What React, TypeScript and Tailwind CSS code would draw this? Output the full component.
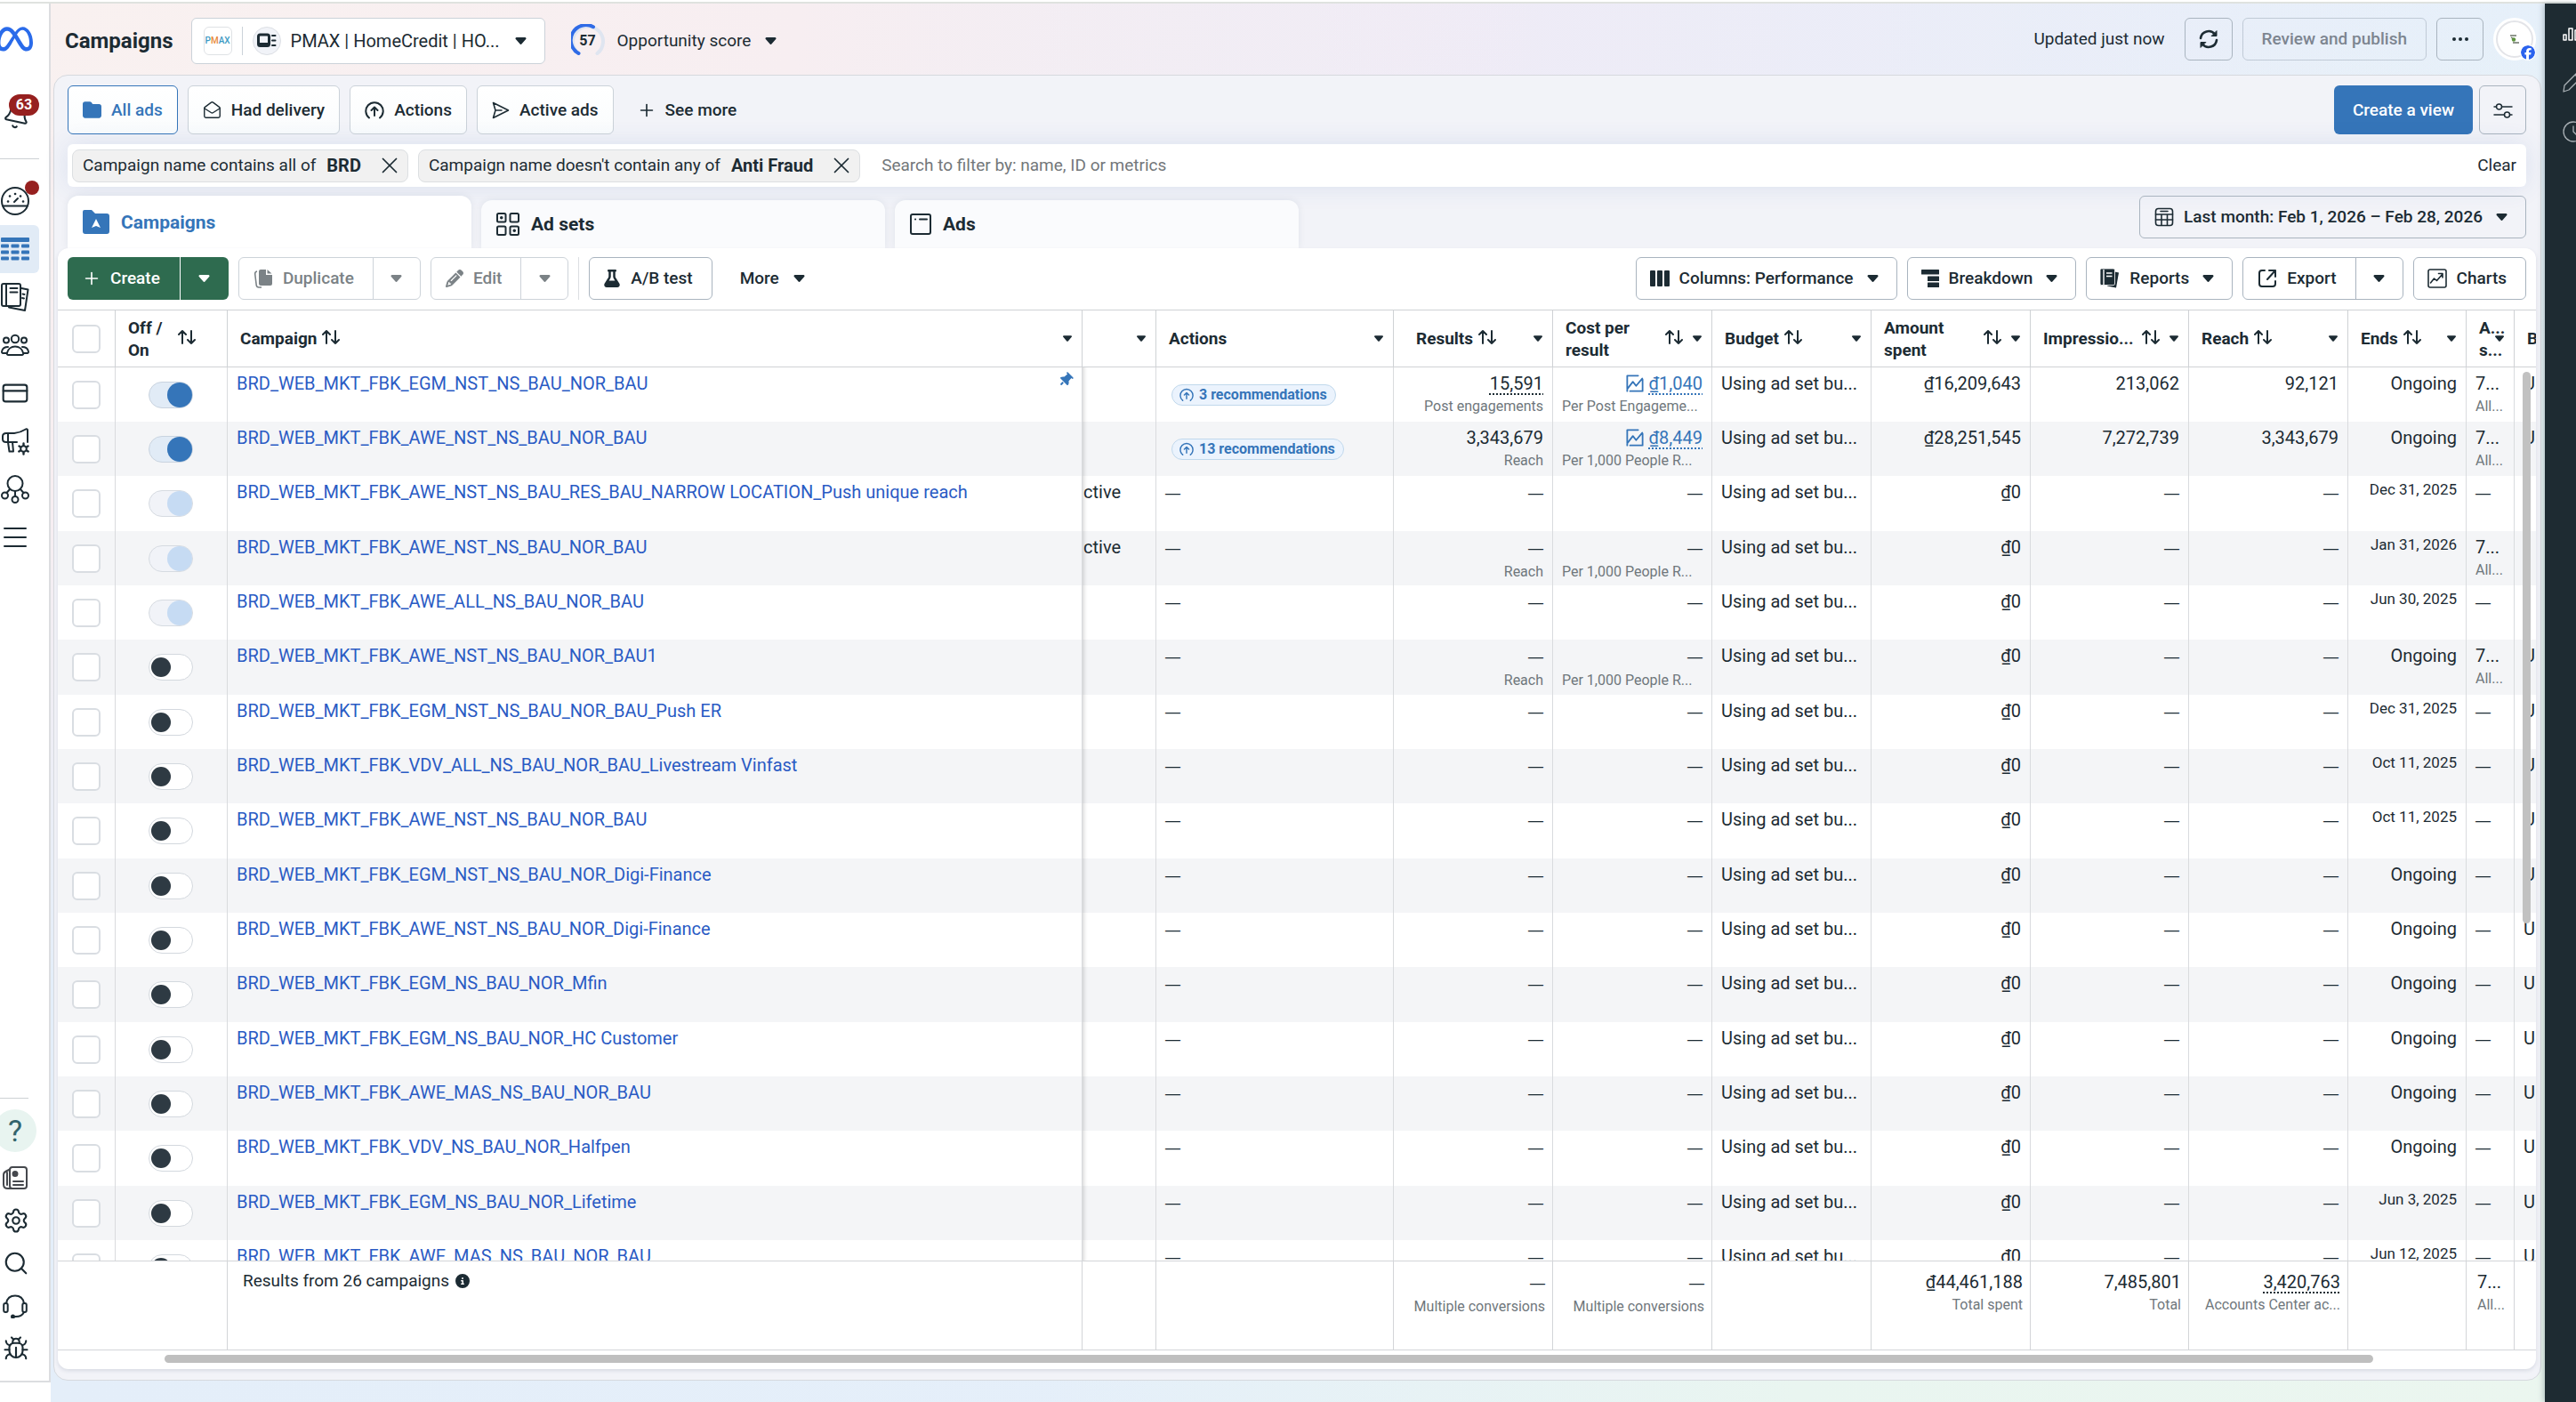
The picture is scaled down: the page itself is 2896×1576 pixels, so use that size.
import React, { ReactNode } from 'react';
import { Bell, MailOpen, Plus, X, CreditCard, Search, Bug, Settings } from 'lucide-react';
import { FaMeta, FaFacebook, FaFolder, FaThumbtack, FaPencil, FaFlask, FaCircleInfo } from 'react-icons/fa6';

type ToggleState = 'on' | 'locked' | 'off';

interface Campaign {
  name: string;
  toggle: ToggleState;
  pinned?: boolean;
  status?: string;
  recommendations?: string;
  results?: string;
  resultsNote?: string;
  cost?: string;
  costNote?: string;
  spent?: string;
  impressions?: string;
  reach?: string;
  ends: string;
  attribution?: boolean;
  bid?: string;
}

const REACH_COST = 'Per 1,000 People R...';

const campaigns: Campaign[] = [
  { name: 'BRD_WEB_MKT_FBK_EGM_NST_NS_BAU_NOR_BAU', toggle: 'on', pinned: true, recommendations: '3 recommendations', results: '15,591', resultsNote: 'Post engagements', cost: '₫1,040', costNote: 'Per Post Engageme...', spent: '₫16,209,643', impressions: '213,062', reach: '92,121', ends: 'Ongoing', attribution: true, bid: 'U' },
  { name: 'BRD_WEB_MKT_FBK_AWE_NST_NS_BAU_NOR_BAU', toggle: 'on', recommendations: '13 recommendations', results: '3,343,679', resultsNote: 'Reach', cost: '₫8,449', costNote: REACH_COST, spent: '₫28,251,545', impressions: '7,272,739', reach: '3,343,679', ends: 'Ongoing', attribution: true, bid: 'U' },
  { name: 'BRD_WEB_MKT_FBK_AWE_NST_NS_BAU_RES_BAU_NARROW LOCATION_Push unique reach', toggle: 'locked', status: 'ctive', ends: 'Dec 31, 2025' },
  { name: 'BRD_WEB_MKT_FBK_AWE_NST_NS_BAU_NOR_BAU', toggle: 'locked', status: 'ctive', resultsNote: 'Reach', costNote: REACH_COST, ends: 'Jan 31, 2026', attribution: true },
  { name: 'BRD_WEB_MKT_FBK_AWE_ALL_NS_BAU_NOR_BAU', toggle: 'locked', ends: 'Jun 30, 2025' },
  { name: 'BRD_WEB_MKT_FBK_AWE_NST_NS_BAU_NOR_BAU1', toggle: 'off', resultsNote: 'Reach', costNote: REACH_COST, ends: 'Ongoing', attribution: true, bid: 'U' },
  { name: 'BRD_WEB_MKT_FBK_EGM_NST_NS_BAU_NOR_BAU_Push ER', toggle: 'off', ends: 'Dec 31, 2025', bid: 'U' },
  { name: 'BRD_WEB_MKT_FBK_VDV_ALL_NS_BAU_NOR_BAU_Livestream Vinfast', toggle: 'off', ends: 'Oct 11, 2025', bid: 'U' },
  { name: 'BRD_WEB_MKT_FBK_AWE_NST_NS_BAU_NOR_BAU', toggle: 'off', ends: 'Oct 11, 2025', bid: 'U' },
  { name: 'BRD_WEB_MKT_FBK_EGM_NST_NS_BAU_NOR_Digi-Finance', toggle: 'off', ends: 'Ongoing', bid: 'U' },
  { name: 'BRD_WEB_MKT_FBK_AWE_NST_NS_BAU_NOR_Digi-Finance', toggle: 'off', ends: 'Ongoing', bid: 'U' },
  { name: 'BRD_WEB_MKT_FBK_EGM_NS_BAU_NOR_Mfin', toggle: 'off', ends: 'Ongoing', bid: 'U' },
  { name: 'BRD_WEB_MKT_FBK_EGM_NS_BAU_NOR_HC Customer', toggle: 'off', ends: 'Ongoing', bid: 'U' },
  { name: 'BRD_WEB_MKT_FBK_AWE_MAS_NS_BAU_NOR_BAU', toggle: 'off', ends: 'Ongoing', bid: 'U' },
  { name: 'BRD_WEB_MKT_FBK_VDV_NS_BAU_NOR_Halfpen', toggle: 'off', ends: 'Ongoing', bid: 'U' },
  { name: 'BRD_WEB_MKT_FBK_EGM_NS_BAU_NOR_Lifetime', toggle: 'off', ends: 'Jun 3, 2025', bid: 'U' },
  { name: 'BRD_WEB_MKT_FBK_AWE_MAS_NS_BAU_NOR_BAU', toggle: 'off', ends: 'Jun 12, 2025', bid: 'U' },
];

/* ---------- icons ---------- */

const Svg: React.FC<{ box?: string; className?: string; children: ReactNode }> = ({ box = '0 0 32 32', className = 'w-8 h-8', children }) => (
  <svg viewBox={box} className={`shrink-0 ${className}`} fill="none" stroke="currentColor" strokeWidth="2" strokeLinecap="round" strokeLinejoin="round" aria-hidden="true">
    {children}
  </svg>
);

const Caret: React.FC<{ small?: boolean }> = ({ small }) => (
  <svg viewBox="0 0 12 8" className={small ? 'w-[10px] h-[7px] shrink-0' : 'w-[13px] h-2 shrink-0'} fill="currentColor" aria-hidden="true">
    <path d="M1.2 0h9.6a1.2 1.2 0 0 1 .9 2L6.9 7.5a1.2 1.2 0 0 1-1.8 0L.3 2a1.2 1.2 0 0 1 .9-2z" />
  </svg>
);

const SortArrows = () => (
  <Svg box="0 0 20 18" className="w-5 h-[18px]">
    <path d="M5 16V2M1 6l4-4 4 4M15 2v14M11 12l4 4 4-4" />
  </Svg>
);

const GaugeIcon = () => (
  <Svg>
    <circle cx="16" cy="16" r="15" />
    <path d="M2.5 21.5h27M15 17l4-4" />
    <path d="M8 16.5h.1M10 10.5h.1M16 8h.1M22 10.5h.1M25 16.5h.1" strokeWidth="2.6" />
  </Svg>
);

const GridIcon = () => (
  <svg viewBox="0 0 32 26" className="w-8 h-[26px] shrink-0" fill="currentColor" aria-hidden="true">
    <rect x="0" y="0" width="32" height="5" rx="1" />
    {[7.5, 14.5, 21.5].map((y) =>
      [0, 11.5, 23].map((x) => <rect key={`${x}-${y}`} x={x} y={y} width="9" height="4" rx="1" />)
    )}
  </svg>
);

const PagesIcon = () => (
  <Svg>
    <rect x="1" y="1" width="21" height="25" rx="2" />
    <path d="M6 1v25M10.5 6h8M10.5 10.5h8M23 6l7.5 1.5-3.5 23.5-18-3.5M24.5 12.5l2 .4M24 17l2 .4" />
  </Svg>
);

const PeopleIcon = () => (
  <Svg box="0 0 32 26" className="w-8 h-[26px]">
    <circle cx="16" cy="6" r="4.2" />
    <circle cx="6" cy="7.500" r="3" />
    <circle cx="26" cy="7.500" r="3" />
    <path d="M8.5 24c-1.500 0-2-1-1.500-2.500C8 17.500 11.500 14.500 16 14.500s8 3 9 7c.5 1.500 0 2.500-1.500 2.500zM7 22H2.500C1 22 .8 20.500 1.200 19.500 2 16.500 4.500 15 8 15M25 22h4.500c1.500 0 1.700-1.500 1.300-2.500-.8-3-3.300-4.500-6.800-4.500" />
  </Svg>
);

const MegaphoneIcon = () => (
  <Svg>
    <path d="M30 17V3.500c0-1-1-1.500-2-1-4 2.500-8 4-13 4.500H6C3.500 7 2 8.500 2 10.500v3C2 16 3.500 17 6 17h12M8 7v10l1.500 10.500h4.500L13 17" />
    <circle cx="25.5" cy="24.5" r="3.300" />
    <path d="M25.5 18.500v2M25.500 28.500v2M20.500 21.500l1.700 1M29 26.500l1.700 1M30.500 21.500l-1.700 1M22 26.500l-1.700 1" strokeWidth="2.400" />
  </Svg>
);

const NodesIcon = () => (
  <Svg>
    <circle cx="16" cy="9.5" r="8.5" />
    <circle cx="4.5" cy="23" r="3.5" />
    <circle cx="16" cy="27.5" r="3.5" />
    <circle cx="27.5" cy="23" r="3.5" />
    <path d="M10 16l-3.500 4M16 18v6M22 16l3.500 4" />
  </Svg>
);

const MenuIcon = () => (
  <Svg>
    <path d="M4 6h24M4 16h24M4 26h24" />
  </Svg>
);

const NewsIcon = () => (
  <Svg box="0 0 28 28" className="w-7 h-7 text-[#45484d]">
    <rect x="8" y="2" width="19" height="24" rx="3" />
    <path d="M8 4.500 4 6.500c-2 1-3 2-3 4v11C1 24.500 3 26 6 26h5M5 8v14M12 18h11M12 22h11" />
    <circle cx="14" cy="9.5" r="2.5" fill="currentColor" />
  </Svg>
);

const HeadsetIcon = () => (
  <Svg box="0 0 28 28" className="w-7 h-7">
    <rect x="1.2" y="11" width="4.5" height="10" rx="2" />
    <rect x="22.3" y="11" width="4.5" height="10" rx="2" />
    <path d="M4 11C5 5.500 9 2.500 14 2.500s9 3 10 8.500M24 21c-2 4-6 5.500-11 5" />
    <circle cx="11.5" cy="26" r="1.5" fill="currentColor" />
  </Svg>
);

const ArrowCircleIcon: React.FC<{ className?: string }> = ({ className = 'w-[22px] h-[22px]' }) => (
  <Svg box="0 0 22 22" className={className}>
    <path d="M5 19.500a9.700 9.700 0 1 1 12 0M11 17V8M7.500 11 11 7.500l3.500 3.500" />
  </Svg>
);

const SendIcon = () => (
  <Svg box="0 0 20 20" className="w-5 h-5">
    <path d="M1.500 1.500 18.500 10 1.500 18.500 4 10zM4 10h7" strokeWidth="1.6" />
  </Svg>
);

const TrendIcon: React.FC<{ className?: string }> = ({ className = 'w-[22px] h-[22px]' }) => (
  <Svg box="0 0 22 22" className={className}>
    <path d="M15 1.500H1.500V20.500M5 20.500H20.500V6M1.500 18l7-9 4 5 7.500-9" />
  </Svg>
);

const PersonCardIcon = () => (
  <Svg box="0 0 22 18" className="w-[22px] h-[18px]">
    <rect x="1.5" y="2" width="12" height="12.5" rx="2" strokeWidth="3" />
    <path d="M3 12h9M17 3h3.500M17 8.500h3.500M17 14h3.500" />
  </Svg>
);

/* ---------- shared controls ---------- */

const CheckBox: React.FC<{ label: string }> = ({ label }) => (
  <input type="checkbox" aria-label={label} className="block appearance-none w-8 h-8 bg-white border-2 border-[#d9dde2] rounded-md" />
);

const toggleTrack: Record<ToggleState, string> = {
  on: 'bg-[#e1ebf6] border-[#c9d3df] justify-end',
  locked: 'bg-[#f1f3f8] border-[#d6dbe1] justify-end',
  off: 'bg-white border-[#d3d8de] justify-start pl-[2px]',
};
const toggleKnob: Record<ToggleState, string> = {
  on: 'w-7 h-7 bg-[#3575b9]',
  locked: 'w-7 h-7 bg-[#c6dbf3]',
  off: 'w-[22px] h-[22px] bg-[#2e3a43]',
};

const Toggle: React.FC<{ state: ToggleState; label: string }> = ({ state, label }) => (
  <button role="switch" aria-checked={state !== 'off'} aria-label={label} className={`flex items-center w-[50px] h-[30px] rounded-full border ${toggleTrack[state]}`}>
    <span className={`rounded-full ${toggleKnob[state]}`} />
  </button>
);

const ToolButton: React.FC<{ icon: ReactNode; children: ReactNode; caret?: boolean }> = ({ icon, children, caret }) => (
  <button className={`flex items-center gap-[11px] h-12 pl-[15px] rounded-md border border-[#a9b4bf] bg-white font-medium ${caret ? 'pr-5' : 'pr-[21px]'}`}>
    {icon}
    <span>{children}</span>
    {caret && <span className="pl-1"><Caret /></span>}
  </button>
);

const SplitButton: React.FC<{ icon: ReactNode; children: ReactNode; disabled?: boolean }> = ({ icon, children, disabled }) => (
  <div className={`flex h-12 rounded-md border bg-white font-medium ${disabled ? 'border-[#cdd3d9] text-[#7b8286]' : 'border-[#a9b4bf]'}`}>
    <button disabled={disabled} className="flex items-center gap-[11px] pl-4 pr-[21px]">
      {icon}
      <span>{children}</span>
    </button>
    <button disabled={disabled} aria-label="More options" className={`flex items-center justify-center w-[53px] border-l ${disabled ? 'border-[#cdd3d9]' : 'border-[#a9b4bf]'}`}>
      <Caret />
    </button>
  </div>
);

const ViewTab: React.FC<{ icon: ReactNode; active?: boolean; children: ReactNode }> = ({ icon, active, children }) => (
  <button className={`flex items-center gap-[11px] h-[55px] px-4 rounded-md border bg-linear-to-b from-white to-[#fafcfd] font-medium ${active ? 'border-[#3575b9] text-[#3575b9]' : 'border-[#cbd2d9]'}`}>
    {icon}
    {children}
  </button>
);

const Chip: React.FC<{ text: string; value: string }> = ({ text, value }) => (
  <div className="flex items-center h-[37px] pl-[11px] pr-[5px] rounded-lg border border-[#dcdfe2] bg-[#f1f1f1]">
    <span>{text}</span>
    <b className="ml-3 text-xl">{value}</b>
    <button aria-label={`Remove filter ${value}`} className="ml-[17px]"><X size={30} strokeWidth={1.4} /></button>
  </div>
);

/* ---------- sidebar ---------- */

const NavItem: React.FC<{ label: string; active?: boolean; children: ReactNode }> = ({ label, active, children }) => (
  <a href="#" aria-label={label} className={`relative flex items-center w-11 h-[54px] pl-px rounded-r-md ${active ? 'bg-[#e1ebf6] text-[#3575b9]' : ''}`}>
    {children}
  </a>
);

const UtilItem: React.FC<{ label: string; children: ReactNode }> = ({ label, children }) => (
  <a href="#" aria-label={label} className="flex items-center w-11 h-12 pl-[3px]">{children}</a>
);

const Sidebar = () => (
  <nav className="flex flex-col w-[57px] shrink-0 bg-white border-r-2 border-b-2 border-[#dcdde0] mb-[22px] overflow-hidden">
    <a href="#" aria-label="Meta" className="flex mt-5 -ml-1 text-[#2a6bea]"><FaMeta className="w-[41px] h-10" /></a>
    <a href="#" aria-label="Notifications" className="relative flex mt-[50px] ml-[3px] h-[34px] w-11">
      <Bell className="w-8 h-8 rotate-12" strokeWidth={1.6} />
      <span className="absolute -top-2 left-[7px] w-[34px] h-6 rounded-full bg-[#96201f] text-white text-base leading-6 font-bold text-center">63</span>
    </a>
    <hr className="mt-[30px] w-11 border-[#cdd1d4]" />
    <div className="mt-5">
      <NavItem label="Account overview">
        <GaugeIcon />
        <span className="absolute top-1 right-0 w-4 h-4 rounded-full bg-[#96201f]" />
      </NavItem>
      <NavItem label="Campaigns" active><GridIcon /></NavItem>
      <NavItem label="Ads reporting"><PagesIcon /></NavItem>
      <NavItem label="Audiences"><PeopleIcon /></NavItem>
      <NavItem label="Billing"><CreditCard className="w-8 h-8" strokeWidth={1.6} /></NavItem>
      <NavItem label="Advertising settings"><MegaphoneIcon /></NavItem>
      <NavItem label="Events manager"><NodesIcon /></NavItem>
      <NavItem label="All tools"><MenuIcon /></NavItem>
    </div>
    <hr className="mt-auto w-8 border-[#cdd1d4]" />
    <a href="#" aria-label="Help" className="flex items-center justify-center mt-3 -ml-[7px] w-12 h-12 rounded-full bg-[#e8f4f0] text-[#33646c] text-[34px] leading-none">?</a>
    <div className="mt-[5px] mb-3">
      <UtilItem label="News"><NewsIcon /></UtilItem>
      <UtilItem label="Settings"><Settings size={30} strokeWidth={1.7} /></UtilItem>
      <UtilItem label="Search"><Search size={30} strokeWidth={1.7} /></UtilItem>
      <UtilItem label="Support"><HeadsetIcon /></UtilItem>
      <UtilItem label="Report a bug"><Bug size={30} strokeWidth={1.7} /></UtilItem>
    </div>
  </nav>
);

const Rail = () => (
  <aside className="w-[35px] shrink-0 overflow-hidden bg-[#1e2b32] text-[#aab1b6] shadow-[-2px_0_6px_rgba(30,60,70,0.25)] z-10">
    <div className="flex flex-col items-start gap-8 pt-5 pl-5">
      <Svg box="0 0 24 24" className="w-6 h-6 text-white">
        <path d="M1 15h3v6H1zM7 8h4v13H7zM14 10h4v11h-4z" strokeWidth="1.5" />
      </Svg>
      <Svg box="0 0 24 24" className="w-6 h-6">
        <path d="M1 23l1-7L17 1l5 5L7 21zM14 4l5 5" strokeWidth="1.3" />
      </Svg>
      <Svg box="0 0 24 24" className="w-6 h-6">
        <circle cx="12" cy="12" r="11" strokeWidth="1.3" />
        <path d="M12 6v6l3 3" strokeWidth="1.3" />
      </Svg>
    </div>
  </aside>
);

/* ---------- header ---------- */

const Header = () => (
  <header className="flex items-center h-20 pl-[13px] pr-[6px] pt-1">
    <h1 className="text-2xl font-bold">Campaigns</h1>
    <button className="flex items-center h-[52px] w-[398px] ml-5 pl-[13px] pr-5 rounded-md border border-[#cbd2d9] bg-white">
      <span className="flex items-center justify-center w-8 h-8 rounded-md border border-[#dfe2e5] text-[10px] font-medium text-[#3c9ac4]">
        P<span className="text-[#e98a3c]">M</span>AX
      </span>
      <span className="w-px h-8 mx-[11px] bg-[#cbd2d9]" />
      <span className="flex items-center justify-center w-8 h-8 rounded-full border border-[#dcdfe4] bg-[#f1f3f8]"><PersonCardIcon /></span>
      <span className="ml-[11px] text-xl">PMAX | HomeCredit | HO...</span>
      <span className="ml-auto"><Caret /></span>
    </button>
    <div className="relative ml-[29px] w-[38px] h-[38px] flex items-center justify-center">
      <svg viewBox="0 0 38 38" className="absolute inset-0" fill="none" strokeWidth="4" strokeLinecap="round" aria-hidden="true">
        <path d="M8.5 33A17 17 0 1 1 29.500 33" stroke="#dfe5f0" />
        <path d="M8.5 33A17 17 0 0 1 25 3.200" stroke="#2f6be6" />
      </svg>
      <b className="text-base">57</b>
    </div>
    <button className="flex items-center gap-4 ml-[14px]">
      Opportunity score <Caret />
    </button>
    <div className="flex items-center ml-auto pb-1">
      <span>Updated just now</span>
      <button aria-label="Refresh" className="flex items-center justify-center w-[54px] h-12 ml-[22px] rounded-md border border-[#a9b4bf]">
        <Svg box="0 0 22 22" className="w-[22px] h-[22px]">
          <path d="M2 10a9 9 0 0 1 16-4.500M20 12a9 9 0 0 1-16 4.500" strokeWidth="2.6" />
          <path d="M20 2v5.500h-5.500zM2 20v-5.500h5.500z" fill="currentColor" strokeWidth="1" />
        </Svg>
      </button>
      <button disabled className="h-12 px-[21px] ml-[11px] rounded-md border border-[#c0cad6] text-[#7d8590] font-medium">Review and publish</button>
      <button aria-label="More" className="flex items-center justify-center gap-[3px] w-[53px] h-12 ml-[11px] rounded-md border border-[#a9b4bf]">
        <i className="w-1 h-1 rounded-full bg-[#1c2b33]" />
        <i className="w-1 h-1 rounded-full bg-[#1c2b33]" />
        <i className="w-1 h-1 rounded-full bg-[#1c2b33]" />
      </button>
      <div className="relative ml-[11px] w-12 h-12 rounded-full bg-white p-[3px]">
        <div className="flex items-center justify-center w-[42px] h-[42px] rounded-full border-2 border-[#e3e4e8]">
          <svg viewBox="0 0 12 10" className="w-3 h-[10px]" aria-hidden="true">
            <path d="M1 1h7M2 3l3 2M4 9h7" stroke="#6c7468" strokeWidth="1.5" />
            <circle cx="5" cy="5.5" r="2.2" fill="#5d9440" />
          </svg>
        </div>
        <FaFacebook className="absolute right-0 bottom-0 w-[18px] h-[18px] rounded-full bg-white text-[#2b63ee] border border-white" />
      </div>
    </div>
  </header>
);

/* ---------- table ---------- */

interface HeadProps {
  label: ReactNode;
  sort?: boolean;
  sortEnd?: boolean;
  caret?: boolean;
  pad?: string;
}

const Head: React.FC<HeadProps> = ({ label, sort, sortEnd, caret = true, pad = 'pl-[14px]' }) => (
  <th scope="col" className="sticky top-0 z-10 h-[65px] p-0 bg-white border-y border-r border-[#cfd2d5] text-left font-bold">
    <div className={`flex items-center pr-[11px] leading-[25px] ${pad}`}>
      <span>{label}</span>
      {sort && <span className={`pb-1 ${sortEnd ? 'ml-auto' : 'ml-[6px]'}`}><SortArrows /></span>}
      {caret && <span className={sortEnd ? 'ml-[11px]' : 'ml-auto'}><Caret small /></span>}
    </div>
  </th>
);

const Dash = () => <span className="font-['Liberation_Sans',sans-serif] text-[17px]">—</span>;

const Cell: React.FC<{ align?: 'left' | 'right'; className?: string; children?: ReactNode }> = ({ align = 'right', className = '', children }) => (
  <td className={`p-0 px-[10px] pt-[6px] align-top border-r border-[#d9dbde] overflow-hidden whitespace-nowrap ${align === 'left' ? 'text-left' : 'text-right'} ${className}`}>
    {children}
  </td>
);

const Note: React.FC<{ left?: boolean; children: ReactNode }> = ({ left, children }) => (
  <div className={`mt-1 text-base leading-5 text-[#6f777c] ${left ? 'text-left' : ''}`}>{children}</div>
);

const Row: React.FC<{ c: Campaign }> = ({ c }) => (
  <tr className="h-[61px] nth-[3n]:h-[62px] even:bg-[#f4f5f7]">
    <td className="p-0 pl-4 border-r border-[#d9dbde]"><CheckBox label={`Select ${c.name}`} /></td>
    <td className="p-0 pl-[37px] border-r border-[#d9dbde]"><Toggle state={c.toggle} label={`Turn ${c.name} on or off`} /></td>
    <Cell align="left">
      <div className="flex justify-between">
        <a href="#" className="text-[#2a5bc4]">{c.name}</a>
        {c.pinned && <FaThumbtack className="w-4 h-4 rotate-45 text-[#3575b9]" />}
      </div>
    </Cell>
    <td className="p-0 pl-px pt-[6px] align-top border-r border-[#d9dbde] shadow-[inset_6px_0_5px_-5px_rgba(0,0,0,0.2)]">{c.status}</td>
    {c.recommendations ? (
      <td className="p-0 pl-[17px] border-r border-[#d9dbde]">
        <button className="flex items-center gap-[6px] h-6 pl-2 pr-[9px] rounded-full border border-[#c0d8ec] bg-[#ebf3fd] text-[#3575b9] text-base font-bold whitespace-nowrap">
          <ArrowCircleIcon className="w-4 h-4" />
          {c.recommendations}
        </button>
      </td>
    ) : (
      <Cell align="left"><Dash /></Cell>
    )}
    <Cell>
      {c.pinned ? <span className="underline decoration-dotted decoration-2 underline-offset-4">{c.results}</span> : c.results ?? <Dash />}
      {c.resultsNote && <Note>{c.resultsNote}</Note>}
    </Cell>
    <Cell>
      {c.cost ? (
        <span className="flex items-center justify-end gap-[6px] text-[#3575b9]">
          <TrendIcon className="w-5 h-5" />
          <a href="#" className="underline decoration-dotted decoration-2 underline-offset-4">{c.cost}</a>
        </span>
      ) : <Dash />}
      {c.costNote && <Note left>{c.costNote}</Note>}
    </Cell>
    <Cell align="left">Using ad set bu...</Cell>
    <Cell>{c.spent ?? '₫0'}</Cell>
    <Cell>{c.impressions ?? <Dash />}</Cell>
    <Cell>{c.reach ?? <Dash />}</Cell>
    <Cell>{c.ends === 'Ongoing' ? c.ends : <div className="text-[17px] leading-[18px]">{c.ends}</div>}</Cell>
    <Cell align="left">
      {c.attribution ? '7...' : <Dash />}
      {c.attribution && <Note>All...</Note>}
    </Cell>
    <Cell align="left" className="border-r-0">{c.bid}</Cell>
  </tr>
);

const Total: React.FC<{ value?: ReactNode; note?: string; left?: boolean }> = ({ value, note, left }) => (
  <td className={`sticky bottom-0 z-10 h-[101px] p-0 pt-[11px] px-2 align-top bg-white border-y border-r border-[#d3d5d8] whitespace-nowrap overflow-hidden ${left ? 'pl-3 text-left' : 'text-right'}`}>
    {value}
    {note && <div className="mt-1 text-base leading-5 text-[#6f777c]">{note}</div>}
  </td>
);

const CampaignTable = () => (
  <div className="relative flex-1 min-h-0 overflow-hidden">
    <table className="w-full table-fixed border-separate border-spacing-0 text-xl leading-6">
      <colgroup>
        <col className="w-[65px]" />
        <col className="w-[126px]" />
        <col />
        <col className="w-[83px]" />
        <col className="w-[267px]" />
        <col className="w-[179px]" />
        <col className="w-[179px]" />
        <col className="w-[179px]" />
        <col className="w-[179px]" />
        <col className="w-[178px]" />
        <col className="w-[179px]" />
        <col className="w-[133px]" />
        <col className="w-[54px]" />
        <col className="w-[24px]" />
      </colgroup>
      <thead className="text-[19px]">
        <tr>
          <th className="sticky top-0 z-10 p-0 pl-4 bg-white border-y border-r border-[#cfd2d5]"><CheckBox label="Select all campaigns" /></th>
          <Head label={<>Off /<br />On</>} sort caret={false} pad="pl-[14px] gap-3" />
          <Head label="Campaign" sort />
          <Head label="" />
          <Head label="Actions" />
          <Head label="Results" sort pad="pl-[25px]" />
          <Head label={<>Cost per<br />result</>} sort sortEnd />
          <Head label="Budget" sort />
          <Head label={<>Amount<br />spent</>} sort sortEnd />
          <Head label="Impressio..." sort sortEnd />
          <Head label="Reach" sort />
          <Head label="Ends" sort />
          <th scope="col" className="sticky top-0 z-10 p-0 pl-[14px] bg-white border-y border-r border-[#cfd2d5] text-left leading-[25px]">
            A...<br />s...
            <span className="absolute right-[11px] top-7"><Caret small /></span>
          </th>
          <th scope="col" className="sticky top-0 z-10 p-0 pl-[14px] bg-white border-y border-[#cfd2d5] text-left overflow-hidden">B</th>
        </tr>
      </thead>
      <tbody>
        {campaigns.map((c, i) => <Row key={i} c={c} />)}
      </tbody>
      <tfoot>
        <tr>
          <td colSpan={2} className="sticky bottom-0 z-10 bg-white border-y border-r border-[#d3d5d8]" />
          <td className="sticky bottom-0 z-10 h-[101px] p-0 pt-[10px] pl-[17px] align-top bg-white border-y border-r border-[#d3d5d8] text-[19px]">
            <div className="flex items-center gap-[7px]">Results from 26 campaigns <FaCircleInfo className="w-4 h-4" /></div>
          </td>
          <Total />
          <Total />
          <Total value={<Dash />} note="Multiple conversions" />
          <Total value={<Dash />} note="Multiple conversions" />
          <Total />
          <Total value="₫44,461,188" note="Total spent" />
          <Total value="7,485,801" note="Total" />
          <Total value={<span className="underline decoration-dotted decoration-2 underline-offset-4">3,420,763</span>} note="Accounts Center ac..." />
          <Total />
          <Total left value="7..." note="All..." />
          <td className="sticky bottom-0 z-10 bg-white border-y border-[#d3d5d8]" />
        </tr>
      </tfoot>
    </table>
    <span className="absolute z-20 right-[6px] top-[70px] w-[9px] h-[620px] rounded-full bg-[#c1c1c1]" />
  </div>
);

/* ---------- page ---------- */

const LevelTab: React.FC<{ icon: ReactNode; active?: boolean; children: ReactNode }> = ({ icon, active, children }) => (
  <button
    role="tab"
    aria-selected={!!active}
    className={`flex items-center gap-[13px] w-[454px] pl-[17px] rounded-t-xl text-[21px] font-bold shadow-[0_0_8px_rgba(30,50,80,0.08)] ${active ? 'h-[59px] bg-white text-[#3575b9]' : 'h-[54px] bg-[#fafbfd]'}`}
  >
    {icon}
    {children}
  </button>
);

export default function App() {
  return (
    <div className="flex flex-col h-screen overflow-hidden bg-white font-[Roboto,sans-serif] text-[19px] leading-6 text-[#1c2b33]">
      <div className="h-1 shrink-0 border-b-2 border-[#dfe2df]" />
      <div className="flex flex-1 min-h-0">
        <Sidebar />
        <div className="flex flex-col flex-1 min-w-0 pl-[3px] pr-1 bg-[radial-gradient(ellipse_60%_70%_at_0%_0%,#f9f1f0_0%,#f7eef1_50%,transparent_100%),radial-gradient(ellipse_60%_100%_at_100%_100%,#ebf6ef_0%,#e9f5f0_50%,transparent_100%),radial-gradient(ellipse_45%_80%_at_55%_0%,#efebf6_0%,transparent_100%),linear-gradient(90deg,#e4eef9_0%,#e6f0fa_100%)]">
          <Header />
          <main className="flex flex-col flex-1 min-h-0 mb-6 rounded-2xl border border-[#d6d9de] bg-[#f2f3f8]">
            <div className="flex gap-[11px] pt-[11px] pl-[15px] pr-4">
              <ViewTab active icon={<FaFolder className="w-[21px] h-[21px]" />}>All ads</ViewTab>
              <ViewTab icon={<MailOpen size={21} strokeWidth={1.6} />}>Had delivery</ViewTab>
              <ViewTab icon={<ArrowCircleIcon />}>Actions</ViewTab>
              <ViewTab icon={<SendIcon />}>Active ads</ViewTab>
              <button className="flex items-center gap-[10px] ml-[15px] font-medium"><Plus size={22} strokeWidth={1.8} />See more</button>
              <button className="ml-auto px-[21px] rounded-md bg-[#3575b9] text-white font-medium">Create a view</button>
              <button aria-label="View settings" className="flex items-center justify-center w-[53px] -ml-1 rounded-md border border-[#a9b4bf]">
                <Svg box="0 0 22 18" className="w-[22px] h-[18px]">
                  <path d="M1 5h2M10 5h11M1 14h11M19 14h2" strokeWidth="1.5" />
                  <circle cx="6.5" cy="5" r="3" strokeWidth="1.5" />
                  <circle cx="15.5" cy="14" r="3" strokeWidth="1.5" />
                </Svg>
              </button>
            </div>

            <div className="flex items-center gap-[11px] h-12 mt-[11px] ml-[15px] mr-4 pl-[5px] pr-[11px] rounded-md bg-white shadow-[0_0_28px_rgba(50,90,170,0.12)]">
              <Chip text="Campaign name contains all of" value="BRD" />
              <Chip text="Campaign name doesn't contain any of" value="Anti Fraud" />
              <input aria-label="Search and filter" placeholder="Search to filter by: name, ID or metrics" className="flex-1 ml-[13px] outline-none placeholder:text-[#73777a]" />
              <button>Clear</button>
            </div>

            <div className="flex items-end gap-[11px] mt-[10px] pl-[15px] pr-4" role="tablist">
              <LevelTab active icon={
                <svg viewBox="0 0 30 27" className="w-[30px] h-[27px]" aria-hidden="true">
                  <path d="M2 0h8l4 4h13a3 3 0 0 1 3 3v17a3 3 0 0 1-3 3H3a3 3 0 0 1-3-3V2a2 2 0 0 1 2-2z" fill="#3575b9" />
                  <path d="M15 10l5 10-5-2-5 2z" fill="#fff" />
                </svg>
              }>Campaigns</LevelTab>
              <LevelTab icon={
                <Svg box="0 0 26 26" className="w-[26px] h-[26px]">
                  <rect x="1" y="1" width="9.5" height="9.5" rx="1.5" />
                  <rect x="15.5" y="1" width="9.5" height="9.5" rx="1.5" />
                  <rect x="1" y="15.5" width="9.5" height="9.5" rx="1.5" />
                  <rect x="15.5" y="15.5" width="9.5" height="9.5" rx="1.5" />
                  <path d="M5.7 5.700h.1M20.200 20.200h.1" strokeWidth="3.5" />
                </Svg>
              }>Ad sets</LevelTab>
              <LevelTab icon={
                <Svg box="0 0 24 24" className="w-6 h-6">
                  <rect x="1" y="1" width="22" height="22" rx="2" />
                  <path d="M6 6.500h.1M11 6.500h8" />
                </Svg>
              }>Ads</LevelTab>
              <button className="flex items-center gap-[11px] h-12 ml-auto mb-[11px] pl-4 pr-5 rounded-md border border-[#a9b4bf] font-medium">
                <Svg box="0 0 22 22" className="w-[22px] h-[22px]">
                  <rect x="1.5" y="1.5" width="19" height="19" rx="3" strokeWidth="1.6" />
                  <path d="M7 4.500h8M1.500 8h19M1.500 14h19M8 8v12M14.500 8v12" strokeWidth="1.6" />
                </Svg>
                <span>Last month: Feb 1, 2026 – Feb 28, 2026</span>
                <span className="pl-1"><Caret /></span>
              </button>
            </div>

            <section className="flex flex-col flex-1 min-h-0 ml-1 mr-[5px] mb-3 rounded-xl bg-white shadow-[0_2px_4px_rgba(30,50,80,0.12)] overflow-hidden">
              <div className="flex items-center gap-[11px] h-[69px] px-[11px] pb-px">
                <div className="flex gap-px h-12 rounded-md overflow-hidden text-white font-medium">
                  <button className="flex items-center gap-[10px] pl-4 pr-[22px] bg-[#2e6b4f]"><Plus size={22} strokeWidth={1.8} />Create</button>
                  <button aria-label="Create options" className="flex items-center justify-center w-[54px] bg-[#2e6b4f]"><Caret /></button>
                </div>
                <SplitButton disabled icon={
                  <svg viewBox="0 0 22 22" className="w-[22px] h-[22px]" fill="currentColor" aria-hidden="true">
                    <path d="M8 1h6v6h7v10a2 2 0 0 1-2 2H8a2 2 0 0 1-2-2V3a2 2 0 0 1 2-2zM15.500 1l5 4.500h-5z" />
                    <path d="M4 3c-2 .5-2.500 1.500-2.300 3l1.500 12.500C3.500 20.500 4.500 21 6 21h3" fill="none" stroke="currentColor" strokeWidth="1.6" />
                  </svg>
                }>Duplicate</SplitButton>
                <SplitButton disabled icon={<FaPencil className="w-5 h-5" />}>Edit</SplitButton>
                <span className="w-px h-12 bg-[#dcdfe2]" />
                <ToolButton icon={<FaFlask className="w-5 h-5" />}>A/B test</ToolButton>
                <button className="flex items-center gap-4 ml-5 font-medium">More <Caret /></button>

                <div className="flex gap-[11px] ml-auto">
                  <ToolButton caret icon={
                    <svg viewBox="0 0 22 18" className="w-[22px] h-[18px]" fill="currentColor" aria-hidden="true">
                      <rect width="6" height="18" rx="1" /><rect x="8" width="6" height="18" rx="1" /><rect x="16" width="6" height="18" rx="1" />
                    </svg>
                  }>Columns: Performance</ToolButton>
                  <ToolButton caret icon={
                    <svg viewBox="0 0 20 20" className="w-5 h-5" fill="currentColor" aria-hidden="true">
                      <rect width="20" height="5.5" rx=".5" /><rect x="7" y="7.500" width="13" height="5.5" rx=".5" /><rect x="7" y="14.500" width="13" height="5.5" rx=".5" />
                    </svg>
                  }>Breakdown</ToolButton>
                  <ToolButton caret icon={
                    <svg viewBox="0 0 22 22" className="w-[22px] h-[22px]" aria-hidden="true">
                      <path d="M16.500 3.500 21 4.500l-3 17-10-2" fill="#1c2b33" />
                      <rect width="16.5" height="18.5" rx="1.5" fill="#1c2b33" stroke="#fff" strokeWidth=".8" />
                      <path d="M4 1v17M7 5h6.500M7 8.500h6.500" stroke="#fff" strokeWidth="1.4" />
                    </svg>
                  }>Reports</ToolButton>
                  <SplitButton icon={
                    <Svg box="0 0 22 22" className="w-[22px] h-[22px]">
                      <path d="M8 2H5a3 3 0 0 0-3 3v12a3 3 0 0 0 3 3h12a3 3 0 0 0 3-3v-3M13 2h7v7M20 2l-9 10" />
                    </Svg>
                  }>Export</SplitButton>
                  <ToolButton icon={
                    <Svg box="0 0 22 22" className="w-[22px] h-[22px]">
                      <rect x="1" y="1" width="20" height="20" rx="2" strokeWidth="1.6" />
                      <path d="M3.500 16l4-5 3 2.500L17 6M12.500 5.500H17V10" strokeWidth="1.6" />
                    </Svg>
                  }>Charts</ToolButton>
                </div>
              </div>
              <CampaignTable />
              <div className="h-[21px] pt-[5px] pl-[120px] pr-[183px]">
                <div className="h-[9px] rounded-full bg-[#bfbfbf]" />
              </div>
            </section>
          </main>
        </div>
        <Rail />
      </div>
    </div>
  );
}
